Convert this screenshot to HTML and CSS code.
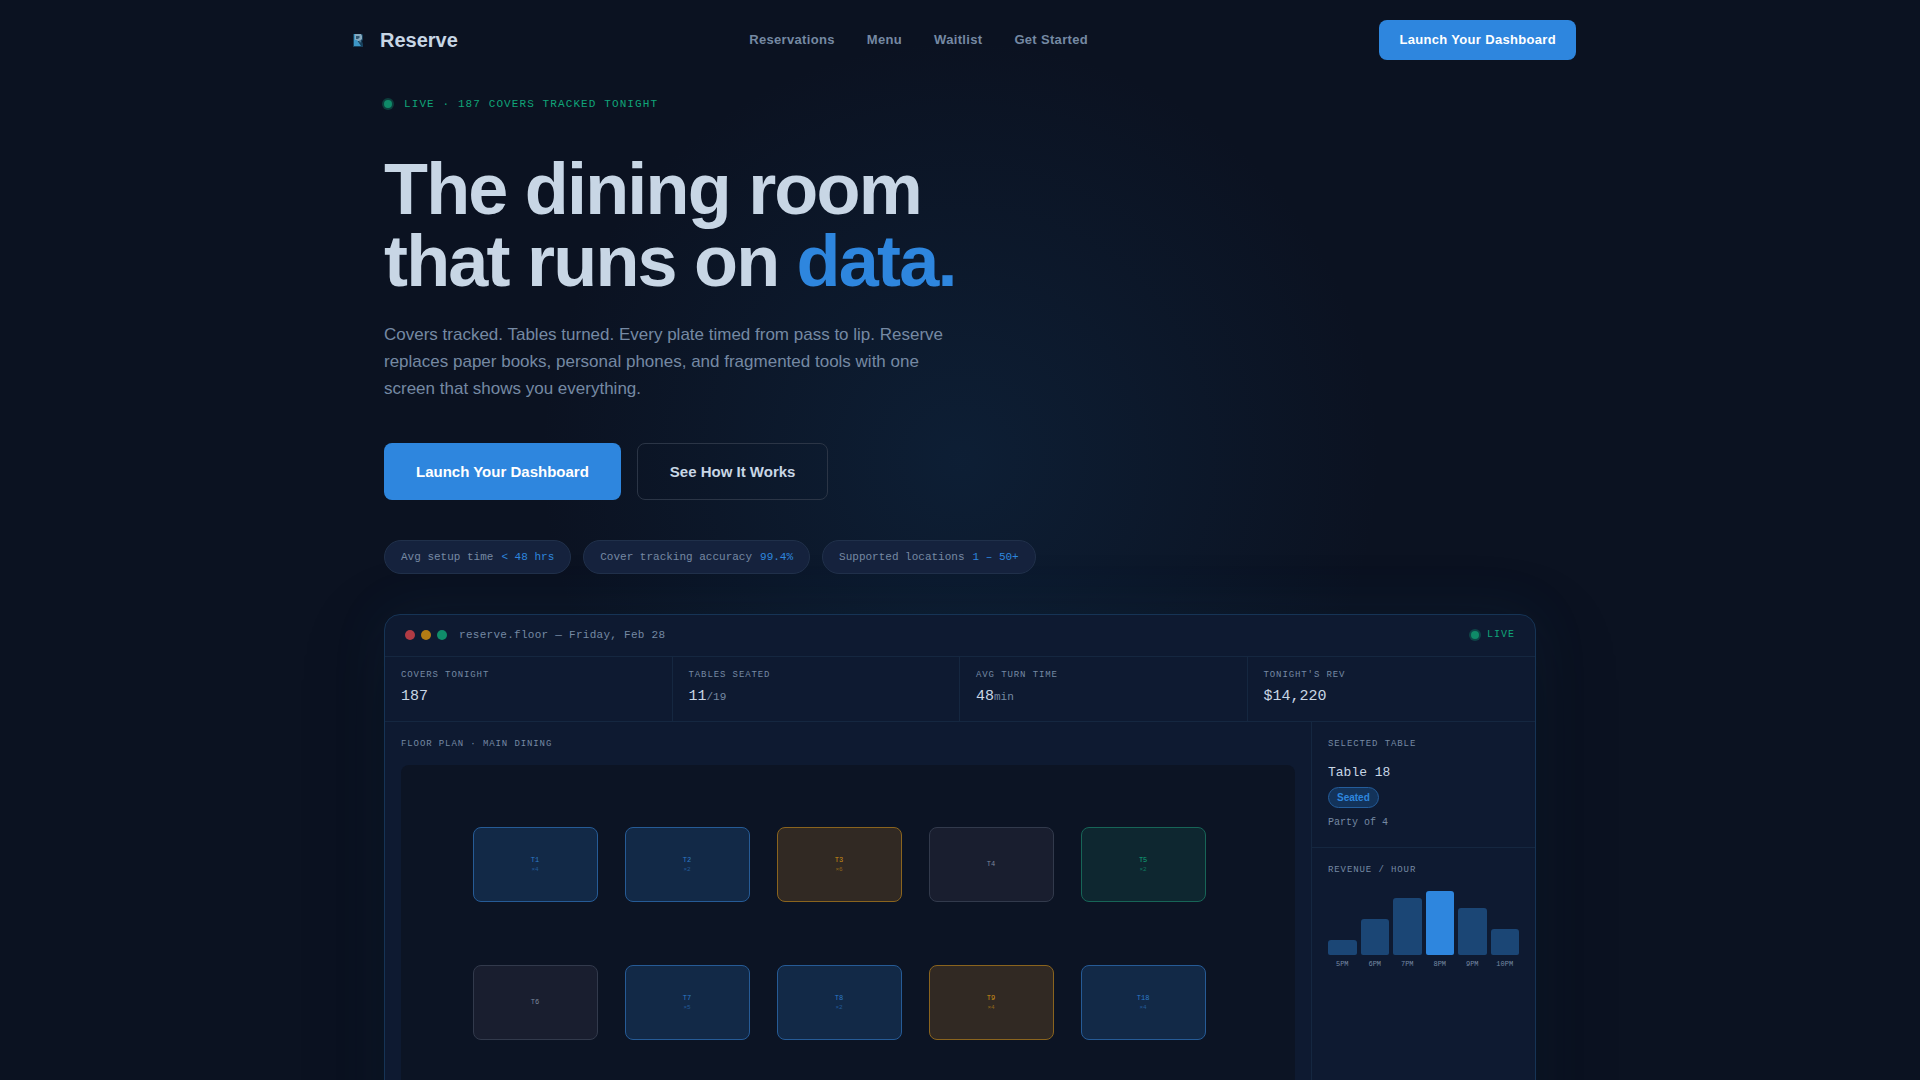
FILE: index.html
```html
<!DOCTYPE html>
<html lang="en">
<head>
	<meta charset="UTF-8">
	<meta name="viewport" content="width=device-width, initial-scale=1">
	<title>Reserve</title>
	<link rel="stylesheet" href="styles.css">
</head>
<body>
	<header class="nav">
		<a href="#" class="logo">
			<svg class="logo-mark" viewBox="0 0 28 28" aria-hidden="true">
				<path d="M9 8h9l1 1v5l-1 1 1 3v3H9z" fill="#17405c"/>
				<path d="M10 8h7l1 2v3l-2 2h-3l-3-1z" fill="#86a9be"/>
				<path d="M12 10h3l1 1-2 2h-2z" fill="#2f5570"/>
				<path d="M10 14h3l4 6h-7z" fill="#3d96c6"/>
				<path d="M15 14l2 1-1 2z" fill="#5f8ba6"/>
				<path d="M10 8h1v6h-1z" fill="#3d96c6"/>
			</svg>
			<span>Reserve</span>
		</a>
		<nav class="nav-links">
			<a href="#">Reservations</a>
			<a href="#">Menu</a>
			<a href="#">Waitlist</a>
			<a href="#">Get Started</a>
		</nav>
		<a href="#" class="btn btn-small">Launch Your Dashboard</a>
	</header>

	<main class="hero">
		<p class="live"><span class="pulse"></span>LIVE · 187 COVERS TRACKED TONIGHT</p>
		<h1>The dining room<br>that runs on <span class="accent">data.</span></h1>
		<p class="lead">Covers tracked. Tables turned. Every plate timed from pass to lip. Reserve replaces paper books, personal phones, and fragmented tools with one screen that shows you everything.</p>
		<div class="actions">
			<a href="#" class="btn">Launch Your Dashboard</a>
			<a href="#" class="btn btn-outline">See How It Works</a>
		</div>
		<ul class="pills">
			<li>Avg setup time <span class="accent">&lt; 48 hrs</span></li>
			<li>Cover tracking accuracy <span class="accent">99.4%</span></li>
			<li>Supported locations <span class="accent">1 – 50+</span></li>
		</ul>

		<section class="dashboard">
			<div class="titlebar">
				<span class="dot red"></span>
				<span class="dot amber"></span>
				<span class="dot green"></span>
				<span class="title">reserve.floor — Friday, Feb 28</span>
				<span class="live live-small"><span class="pulse"></span>LIVE</span>
			</div>
			<dl class="stats">
				<div><dt class="label">COVERS TONIGHT</dt><dd>187</dd></div>
				<div><dt class="label">TABLES SEATED</dt><dd>11<small>/19</small></dd></div>
				<div><dt class="label">AVG TURN TIME</dt><dd>48<small>min</small></dd></div>
				<div><dt class="label">TONIGHT'S REV</dt><dd>$14,220</dd></div>
			</dl>
			<div class="panels">
				<div class="floor">
					<h2 class="label">FLOOR PLAN · MAIN DINING</h2>
					<div class="plan">
						<button type="button" class="table seated">T1<small>×4</small></button>
						<button type="button" class="table seated">T2<small>×2</small></button>
						<button type="button" class="table waiting">T3<small>×6</small></button>
						<button type="button" class="table">T4</button>
						<button type="button" class="table ready">T5<small>×2</small></button>
						<button type="button" class="table">T6</button>
						<button type="button" class="table seated">T7<small>×5</small></button>
						<button type="button" class="table seated">T8<small>×2</small></button>
						<button type="button" class="table waiting">T9<small>×4</small></button>
						<button type="button" class="table seated">T18<small>×4</small></button>
					</div>
				</div>
				<aside class="side">
					<div class="selected">
						<h2 class="label">SELECTED TABLE</h2>
						<p class="name">Table 18</p>
						<span class="badge">Seated</span>
						<p class="party">Party of 4</p>
					</div>
					<div class="revenue">
						<h2 class="label">REVENUE / HOUR</h2>
						<div class="chart">
							<div class="col"><div class="bar" style="height: 22%"></div></div>
							<div class="col"><div class="bar" style="height: 55%"></div></div>
							<div class="col"><div class="bar" style="height: 88%"></div></div>
							<div class="col"><div class="bar peak" style="height: 100%"></div></div>
							<div class="col"><div class="bar" style="height: 73%"></div></div>
							<div class="col"><div class="bar" style="height: 40%"></div></div>
						</div>
						<div class="hours">
							<span>5PM</span><span>6PM</span><span>7PM</span><span>8PM</span><span>9PM</span><span>10PM</span>
						</div>
					</div>
				</aside>
			</div>
		</section>
	</main>
</body>
</html>
```
FILE: styles.css
```css
*{
	margin: 0;
	padding: 0;
	box-sizing: border-box;
}
body{
	background: radial-gradient(circle 420px at 50% 460px, rgba(20,70,115,0.24), rgba(20,70,115,0)) #0b1221;
	color: #c8d6e5;
	font-family: "Liberation Sans", Arial, sans-serif;
}
a{
	color: inherit;
	text-decoration: none;
}
ul{
	list-style: none;
}
.accent{
	color: #2e86de;
}
.nav{
	max-width: 1280px;
	height: 80px;
	margin: 0 auto;
	padding: 0 24px;
	display: flex;
	align-items: center;
	justify-content: space-between;
}
.logo{
	display: flex;
	align-items: center;
	gap: 8px;
	font-size: 20px;
	font-weight: bold;
}
.logo-mark{
	width: 28px;
	height: 28px;
}
.nav-links{
	display: flex;
	gap: 32px;
	color: #7589a3;
	font-size: 13px;
	font-weight: bold;
	line-height: 16px;
	letter-spacing: 0.025em;
}
.btn{
	padding: 20px 32px;
	border-radius: 8px;
	background: #2e86de;
	color: #fff;
	font-size: 15px;
	font-weight: bold;
	line-height: 17px;
}
.btn-small{
	padding: 12px 20px;
	font-size: 13px;
	line-height: 16px;
	letter-spacing: 0.025em;
}
.btn-outline{
	padding: 19px 32px;
	border: 1px solid #2b3546;
	background: none;
	color: #c8d6e5;
}
.hero{
	max-width: 1200px;
	margin: 0 auto;
	padding: 16px 24px 96px;
}
.live{
	display: flex;
	align-items: center;
	gap: 12px;
	color: #10a579;
	font-family: "Liberation Mono", monospace;
	font-size: 11px;
	line-height: 16px;
	letter-spacing: 0.1em;
}
.live-small{
	gap: 8px;
	margin-left: auto;
	font-size: 10px;
}
.pulse{
	width: 8px;
	height: 8px;
	border-radius: 50%;
	background: #0f8a68;
	box-shadow: 0 0 0 2px rgba(16,165,121,0.3);
}
h1{
	margin: 41px 0 24px;
	font-size: 72px;
	line-height: 72px;
	letter-spacing: -0.025em;
}
.lead{
	max-width: 580px;
	color: #7589a3;
	font-size: 17px;
	line-height: 1.6;
}
.actions{
	display: flex;
	gap: 16px;
	margin: 40px 0;
}
.pills{
	display: flex;
	gap: 12px;
	margin-bottom: 40px;
}
.pills li{
	display: flex;
	gap: 8px;
	padding: 8px 16px;
	border: 1px solid #20304a;
	border-radius: 17px;
	background: #15223d;
	color: #7589a3;
	font-family: "Liberation Mono", monospace;
	font-size: 11px;
	line-height: 16px;
}
.dashboard{
	border: 1px solid #163455;
	border-radius: 16px;
	background: #0e1a31;
	box-shadow: 0 24px 80px rgba(0,0,0,0.25), 0 0 60px rgba(46,134,222,0.08);
	font-family: "Liberation Mono", monospace;
}
.titlebar{
	display: flex;
	align-items: center;
	gap: 6px;
	padding: 12px 20px 13px;
	border-bottom: 1px solid #152740;
}
.dot{
	width: 10px;
	height: 10px;
	border-radius: 50%;
}
.red{
	background: #b13b44;
}
.amber{
	background: #b47c14;
}
.green{
	background: #0f8c69;
}
.title{
	margin-left: 6px;
	color: #7589a3;
	font-size: 11px;
	letter-spacing: 0.025em;
}
.label{
	color: #7589a3;
	font-size: 9px;
	font-weight: normal;
	line-height: 12px;
	letter-spacing: 0.1em;
}
.stats{
	display: grid;
	grid-template-columns: repeat(4, 1fr);
	border-bottom: 1px solid #152740;
}
.stats div{
	padding: 12px 16px;
	border-right: 1px solid #152740;
}
.stats div:last-child{
	border-right: none;
}
.stats dd{
	margin-top: 4px;
	font-size: 15px;
	line-height: 24px;
}
.stats small{
	color: #7589a3;
	font-size: 11px;
}
.panels{
	display: grid;
	grid-template-columns: 1fr 224px;
}
.floor{
	padding: 16px;
}
.plan{
	display: grid;
	grid-template-columns: repeat(5, 1fr);
	grid-auto-rows: 75px;
	column-gap: 27px;
	row-gap: 63px;
	min-height: 480px;
	margin-top: 15px;
	padding: 62px 10% 62px 8%;
	border-radius: 8px;
	background: #0c1424;
}
.table{
	display: flex;
	flex-direction: column;
	align-items: center;
	justify-content: center;
	gap: 3px;
	border: 1px solid #323a4c;
	border-radius: 8px;
	background: #191e2f;
	color: #7b879b;
	font-family: inherit;
	font-size: 7px;
	line-height: 8px;
}
.table small{
	font-size: 6px;
	line-height: 6px;
	opacity: 0.6;
}
.seated{
	border-color: #265b96;
	background: #122947;
	color: #2e7bc9;
}
.waiting{
	border-color: #8a641e;
	background: #312923;
	color: #c98e15;
}
.ready{
	border-color: #176557;
	background: #0e2730;
	color: #10a579;
}
.side{
	border-left: 1px solid #152740;
}
.selected,
.revenue{
	padding: 16px;
}
.selected{
	border-bottom: 1px solid #152740;
}
.name{
	margin: 13px 0 4px;
	font-size: 13px;
	line-height: 20px;
}
.badge{
	display: inline-block;
	padding: 3px 8px;
	border: 1px solid #245d9b;
	border-radius: 11px;
	background: #13335a;
	color: #2e86de;
	font-family: "Liberation Sans", Arial, sans-serif;
	font-size: 10px;
	font-weight: bold;
	line-height: 13px;
}
.party{
	margin-top: 7px;
	color: #7589a3;
	font-size: 10px;
	line-height: 16px;
}
.chart{
	display: flex;
	align-items: flex-end;
	gap: 4px;
	height: 64px;
	margin-top: 15px;
}
.col{
	flex: 1;
	height: 100%;
	display: flex;
	align-items: flex-end;
}
.bar{
	width: 100%;
	border-radius: 3px 3px 2px 2px;
	background: #1b4675;
}
.peak{
	background: #2e86de;
}
.hours{
	display: flex;
	gap: 4px;
	margin-top: 4px;
	color: #7589a3;
	font-size: 7px;
	line-height: 10px;
}
.hours span{
	flex: 1;
	text-align: center;
}
```
